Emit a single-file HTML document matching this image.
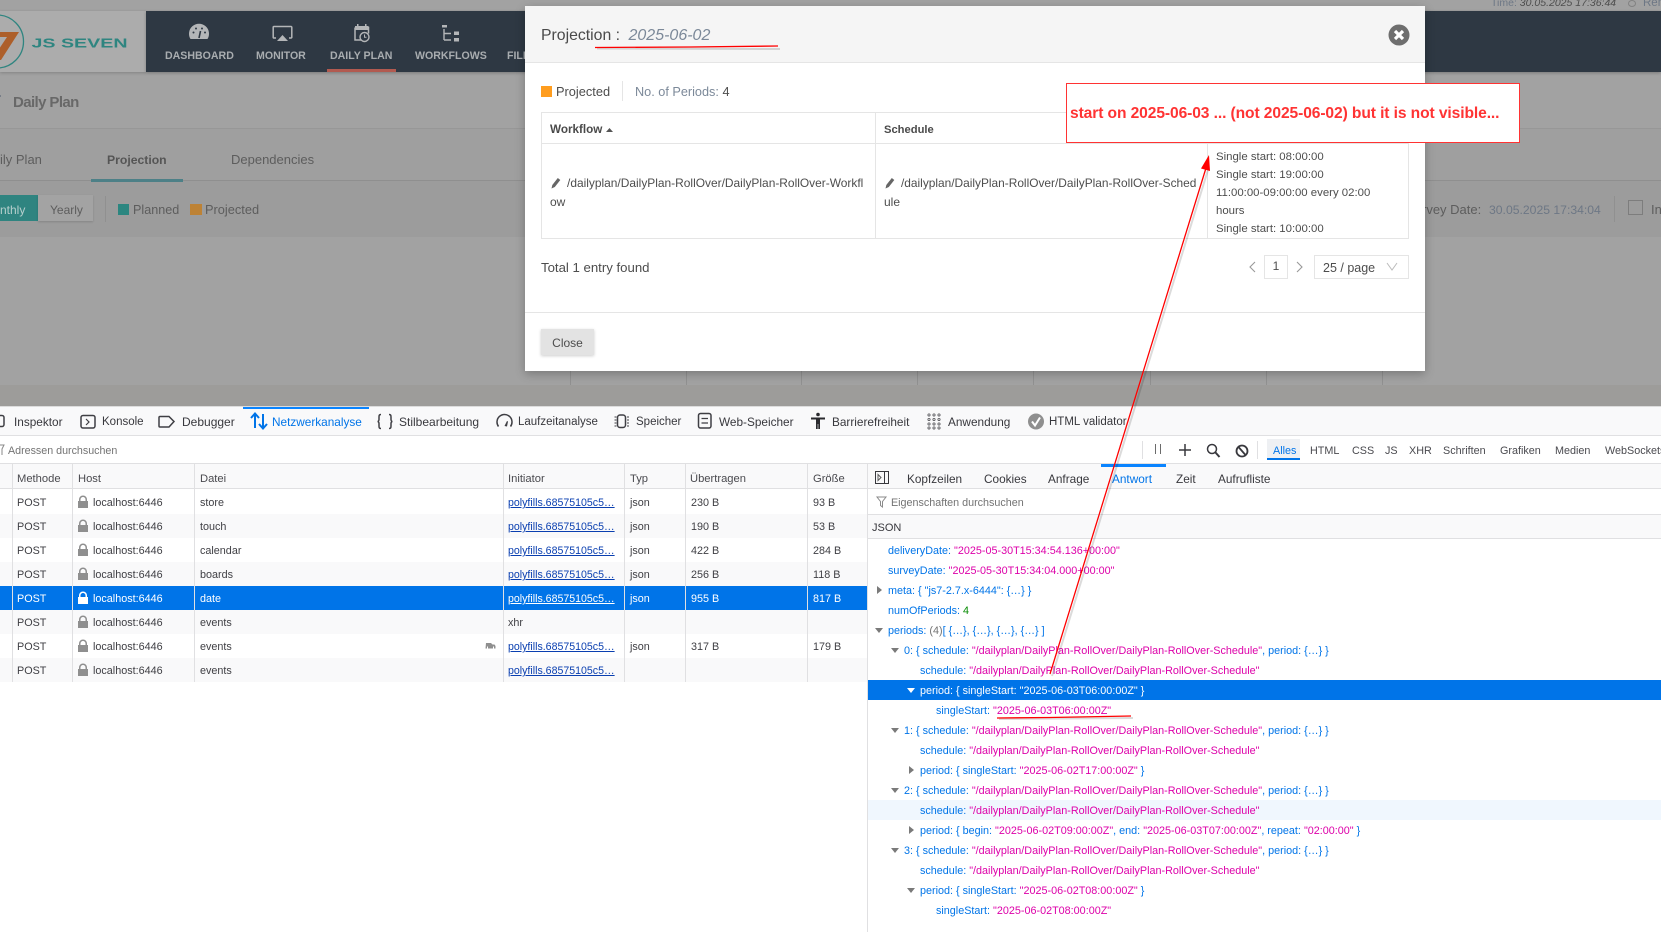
<!DOCTYPE html>
<html lang="de"><head><meta charset="utf-8"><title>Projection</title>
<style>
html,body{margin:0;padding:0;width:1661px;height:932px;overflow:hidden;background:#fff}
body{position:relative;font-family:"Liberation Sans",Arial,sans-serif;font-size:11px;color:#38383d}
div,span{box-sizing:border-box}
.a{position:absolute}
.t{position:absolute;white-space:nowrap;line-height:20px;height:20px}
svg{position:absolute;left:0;top:0;overflow:visible}
.nav{color:#a9adb0;font-weight:bold;font-size:10.6px;top:46px}
.dt{font-size:11.5px;color:#38383d;top:412px}
.ft{font-size:10.8px;color:#4a4a4f;top:441px}
.th{font-size:11.2px;color:#4a4a4f;top:469px}
.pt{font-size:11.8px;color:#38383d;top:468.500px}
.r{position:absolute;left:0;width:867px;height:24px;line-height:24px;font-size:10.8px;color:#3f3f44;background:#fff}
.r.o{background:#f9f9fa}
.r span{position:absolute;white-space:nowrap;top:1px}
.r .i{color:#0a3fb0;text-decoration:underline;font-size:10.6px}
.r.s{background:#0074e8;color:#fff}
.r.s .i{color:#fff}
.j{position:absolute;height:20px;line-height:20px;white-space:nowrap;font-size:10.8px;color:#0074e8;margin-top:1px}
.j b{font-weight:normal;color:#dd00a9}
.j.s,.j.s b{color:#fff}
.m{font-size:12px;color:#4d4d4d}
.v{position:absolute;width:1px;background:#e0e0e2}
</style></head><body>

<!-- dimmed application behind modal -->
<div class="a" style="left:0;top:0;width:1661px;height:406px;background:#a2a2a2"></div>
<div class="a" style="left:0;top:11px;width:146px;height:61px;background:#acacac;box-shadow:0 1px 3px rgba(0,0,0,.2)"></div>
<div class="a" style="left:146px;top:11px;width:1515px;height:61px;background:#2e3843;box-shadow:0 1px 3px rgba(0,0,0,.25)"></div>
<div class="a" style="left:327px;top:69px;width:69px;height:3px;background:#b25a50"></div>
<div class="a" style="left:0;top:128px;width:1661px;height:1px;background:#979797"></div>
<div class="a" style="left:0;top:129px;width:1661px;height:51px;background:#9f9f9f"></div>
<div class="a" style="left:0;top:180px;width:1661px;height:1px;background:#8f8f8f"></div>
<div class="a" style="left:0;top:181px;width:1661px;height:56px;background:#9c9c9c"></div>
<div class="a" style="left:91px;top:179px;width:92px;height:3px;background:#4d8087"></div>
<div class="a" style="left:0;top:385px;width:1661px;height:21px;background:#9d9c9a"></div>
<div class="a" style="left:0;top:195px;width:38px;height:26px;background:#2f8480"></div>
<div class="a" style="left:38px;top:195px;width:55px;height:26px;background:#a3a3a3;box-shadow:0 1px 2px rgba(0,0,0,.15)"></div>
<div class="a" style="left:105px;top:196px;width:1px;height:26px;background:#909090"></div>
<div class="a" style="left:118px;top:204px;width:11px;height:11px;background:#2c8680"></div>
<div class="a" style="left:190px;top:204px;width:12px;height:11px;background:#bd8235"></div>
<div class="a" style="left:1614px;top:196px;width:1px;height:26px;background:#909090"></div>
<div class="a" style="left:1628px;top:200px;width:15px;height:15px;border:1px solid #7d7d7d"></div>
<div class="a" style="left:570px;top:371px;width:1px;height:14px;background:#919191"></div>
<div class="a" style="left:686px;top:371px;width:1px;height:14px;background:#919191"></div>
<div class="a" style="left:801px;top:371px;width:1px;height:14px;background:#919191"></div>
<div class="a" style="left:917px;top:371px;width:1px;height:14px;background:#919191"></div>
<div class="a" style="left:1033px;top:371px;width:1px;height:14px;background:#919191"></div>
<div class="a" style="left:1150px;top:371px;width:1px;height:14px;background:#919191"></div>
<div class="a" style="left:1266px;top:371px;width:1px;height:14px;background:#919191"></div>
<div class="a" style="left:1382px;top:371px;width:1px;height:14px;background:#919191"></div>

<svg width="1661" height="406" viewBox="0 0 1661 406">
  <circle cx="-3" cy="41.500" r="26.500" fill="none" stroke="#2f8580" stroke-width="1.300"/>
  <path d="M-3 32H19L1 60H-3V52L7 37H-3Z" fill="#ad5f2a"/>
  <text x="31.500" y="47.500" textLength="96" lengthAdjust="spacingAndGlyphs" font-family="Liberation Sans" font-weight="bold" font-size="12.500" fill="#2f8580">JS SEVEN</text>
  <!-- dashboard -->
  <path d="M190.500 39a10 10 0 1 1 17 0Z" fill="#b4b6b8"/>
  <path d="M199 38l1.500-7" stroke="#2e3843" stroke-width="1.600"/>
  <circle cx="193.500" cy="32.500" r="1" fill="#2e3843"/><circle cx="196" cy="28.500" r="1" fill="#2e3843"/><circle cx="202" cy="28.500" r="1" fill="#2e3843"/><circle cx="205" cy="32.500" r="1" fill="#2e3843"/>
  <!-- monitor -->
  <path d="M276 38h-2a.8.8 0 0 1-.8-.8V27.300a.8.8 0 0 1 .8-.8h17a.8.8 0 0 1 .8.8v9.900a.8.8 0 0 1-.8.8h-2" fill="none" stroke="#b4b6b8" stroke-width="1.500"/>
  <path d="M277 41l5.500-6 5.500 6Z" fill="#b4b6b8"/>
  <!-- calendar -->
  <path d="M355 27.500h13.500v6M355 27.500v12.500h6" fill="none" stroke="#b4b6b8" stroke-width="1.500"/>
  <rect x="355" y="26" width="13.500" height="4" fill="#b4b6b8"/>
  <rect x="357" y="24" width="1.500" height="3" fill="#b4b6b8"/><rect x="365" y="24" width="1.500" height="3" fill="#b4b6b8"/>
  <circle cx="364.500" cy="37" r="4.500" fill="#2e3843" stroke="#b4b6b8" stroke-width="1.400"/>
  <path d="M364.500 34.500v2.700h2" fill="none" stroke="#b4b6b8" stroke-width="1"/>
  <!-- workflows -->
  <rect x="442" y="25" width="5" height="2.500" fill="#b4b6b8"/>
  <path d="M444 29v11M444 33.500h7M444 40h7" stroke="#b4b6b8" stroke-width="1.400" fill="none"/>
  <rect x="454" y="31.500" width="5" height="3.500" fill="#b4b6b8"/><rect x="454" y="38" width="5" height="3.500" fill="#b4b6b8"/>
  <path d="M0 96h1" stroke="#6b7280" stroke-width="1.500"/>
</svg>

<span class="t nav" style="left:165px">DASHBOARD</span>
<span class="t nav" style="left:256px">MONITOR</span>
<span class="t nav" style="left:330px">DAILY PLAN</span>
<span class="t nav" style="left:415px">WORKFLOWS</span>
<span class="t nav" style="left:507px">FILES</span>
<span class="t" style="left:13px;top:93px;font-size:15px;color:#686868;font-weight:bold;letter-spacing:-.6px">Daily Plan</span>
<span class="t" style="left:0;top:150px;font-size:13px;color:#5d5d5d">ily Plan</span>
<span class="t" style="left:107px;top:150px;font-size:12.200px;font-weight:bold;color:#555">Projection</span>
<span class="t" style="left:231px;top:150px;font-size:13px;color:#5d5d5d">Dependencies</span>
<span class="t" style="left:0;top:200px;font-size:12px;color:#b6cfcd">nthly</span>
<span class="t" style="left:50px;top:200px;font-size:12px;color:#5d5d5d">Yearly</span>
<span class="t" style="left:133px;top:199.500px;font-size:12.600px;color:#5d5d5d">Planned</span>
<span class="t" style="left:205px;top:199.500px;font-size:12.800px;color:#5d5d5d">Projected</span>
<span class="t" style="left:1422px;top:199.500px;font-size:13px;color:#5d5d5d">rvey Date:</span>
<span class="t" style="left:1489px;top:199.500px;font-size:12.200px;color:#6d7785">30.05.2025 17:34:04</span>
<span class="t" style="left:1651px;top:199.500px;font-size:13px;color:#5d5d5d">In</span>
<span class="t" style="left:1491px;top:-7px;font-size:10.500px;color:#666"><span style="color:#6d7785">Time:</span> <i style="color:#4d4d4d">30.05.2025 17:36:44</i></span>
<div class="a" style="left:1628px;top:0;width:8px;height:7px;border:1px solid #828282;border-radius:50%"></div>
<span class="t" style="left:1643px;top:-7px;font-size:11.500px;color:#6d7785">Ren</span>

<!-- modal -->
<div class="a" style="left:525px;top:6px;width:900px;height:365px;background:#fff;box-shadow:0 3px 9px rgba(0,0,0,.25)">
  <div class="a" style="left:0;top:0;width:900px;height:57px;background:#f5f5f5;border-bottom:1px solid #e5e5e5"></div>
  <div class="a" style="left:0;top:306px;width:900px;height:1px;background:#e5e5e5"></div>
</div>
<span class="t" style="left:541px;top:26px;font-size:15.800px;color:#4a4a4a">Projection :</span>
<i class="t" style="left:628.500px;top:26px;font-size:16px;color:#7c8999">2025-06-02</i>
<svg width="24" height="24" style="left:1387px;top:23px" viewBox="0 0 24 24">
  <circle cx="12" cy="12" r="10.500" fill="#6e6e6e"/>
  <path d="M8 8l8 8M16 8l-8 8" stroke="#fff" stroke-width="3.200"/>
</svg>
<div class="a" style="left:541px;top:86px;width:11px;height:11px;background:#ff9d1f"></div>
<span class="t m" style="left:556px;top:82px;font-size:12.800px">Projected</span>
<div class="v" style="left:622px;top:81px;height:20px;background:#e5e5e5"></div>
<span class="t" style="left:635px;top:82px;font-size:12.700px;color:#7c8999">No. of Periods: <span style="color:#4d4d4d">4</span></span>

<!-- modal table -->
<div class="a" style="left:541px;top:112px;width:868px;height:127px;border:1px solid #e5e5e5"></div>
<div class="a" style="left:541px;top:143px;width:868px;height:1px;background:#e5e5e5"></div>
<div class="v" style="left:875px;top:112px;height:127px;background:#e5e5e5"></div>
<div class="v" style="left:1207px;top:143px;height:96px;background:#e5e5e5"></div>
<span class="t" style="left:550px;top:119.500px;font-size:11.700px;font-weight:bold;color:#4a4a4a">Workflow</span>
<svg width="10" height="10" style="left:606px;top:125px"><path d="M0 7l3.500-4 3.500 4Z" fill="#555"/></svg>
<span class="t" style="left:884px;top:119.500px;font-size:11.200px;font-weight:bold;color:#4a4a4a">Schedule</span>
<svg width="12" height="14" style="left:550px;top:176px" viewBox="0 0 12 14"><path d="M1.500 12.500l.8-3.500 5.500-7 2.500 2-5.500 7Z" fill="#666"/></svg>
<span class="t m" style="left:567px;top:173px;font-size:11.950px">/dailyplan/DailyPlan-RollOver/DailyPlan-RollOver-Workfl</span>
<span class="t m" style="left:550px;top:191.500px">ow</span>
<svg width="12" height="14" style="left:884px;top:176px" viewBox="0 0 12 14"><path d="M1.500 12.500l.8-3.500 5.500-7 2.500 2-5.500 7Z" fill="#666"/></svg>
<span class="t m" style="left:901px;top:173px;font-size:11.900px">/dailyplan/DailyPlan-RollOver/DailyPlan-RollOver-Sched</span>
<span class="t m" style="left:884px;top:191.500px">ule</span>
<span class="t m" style="left:1216px;top:146.500px;font-size:11.400px">Single start: 08:00:00</span>
<span class="t m" style="left:1216px;top:164.500px;font-size:11.400px">Single start: 19:00:00</span>
<span class="t m" style="left:1216px;top:182.500px;font-size:11.400px">11:00:00-09:00:00 every 02:00</span>
<span class="t m" style="left:1216px;top:200.500px;font-size:11.400px">hours</span>
<span class="t m" style="left:1216px;top:218.500px;font-size:11.400px">Single start: 10:00:00</span>
<span class="t m" style="left:541px;top:258px;font-size:13.200px">Total 1 entry found</span>
<svg width="10" height="12" style="left:1248px;top:261px"><path d="M7 1L2 6l5 5" fill="none" stroke="#999" stroke-width="1.100"/></svg>
<div class="a" style="left:1264px;top:255px;width:24px;height:24px;border:1px solid #e5e5e5;text-align:center;line-height:21px;font-size:12px;color:#4d4d4d">1</div>
<svg width="10" height="12" style="left:1295px;top:261px"><path d="M2 1l5 5-5 5" fill="none" stroke="#999" stroke-width="1.100"/></svg>
<div class="a" style="left:1314px;top:255px;width:95px;height:24px;border:1px solid #e5e5e5"></div>
<span class="t m" style="left:1323px;top:258px;font-size:12.500px">25 / page</span>
<svg width="12" height="10" style="left:1386px;top:262px"><path d="M1 1l5 7 5-7" fill="none" stroke="#bbb" stroke-width="1"/></svg>
<div class="a" style="left:541px;top:329px;width:53px;height:26px;background:#e3e3e3;box-shadow:0 1px 3px rgba(0,0,0,.2);text-align:center;line-height:28px;font-size:12px;color:#4d4d4d">Close</div>

<!-- devtools -->
<div class="a" style="left:0;top:406px;width:1661px;height:526px;background:#fff"></div>
<div class="a" style="left:0;top:406px;width:1661px;height:30px;background:#f9f9fa;border-bottom:1px solid #e0e0e2;border-top:1px solid #dcdcdc"></div>
<div class="a" style="left:243px;top:407px;width:126px;height:2px;background:#0a84ff"></div>
<div class="a" style="left:0;top:463px;width:1661px;height:1px;background:#e0e0e2"></div>
<div class="a" style="left:0;top:464px;width:867px;height:25px;background:#f9f9fa;border-bottom:1px solid #e0e0e2"></div>
<div class="a" style="left:868px;top:464px;width:793px;height:25px;background:#f9f9fa;border-bottom:1px solid #e0e0e2"></div>
<div class="a" style="left:868px;top:514px;width:793px;height:25px;background:#f9f9fa;border-top:1px solid #e0e0e2;border-bottom:1px solid #e0e0e2"></div>
<div class="a" style="left:1101px;top:464px;width:65px;height:3px;background:#0a84ff"></div>

<span class="t dt" style="left:14px;font-size:11.800px">Inspektor</span>
<span class="t dt" style="left:102px">Konsole</span>
<span class="t dt" style="left:182px;font-size:12px">Debugger</span>
<span class="t dt" style="left:272px;color:#0074e8;font-size:11.800px">Netzwerkanalyse</span>
<span class="t dt" style="left:399px;font-size:12px">Stilbearbeitung</span>
<span class="t dt" style="left:518px">Laufzeitanalyse</span>
<span class="t dt" style="left:636px">Speicher</span>
<span class="t dt" style="left:719px;font-size:11.800px">Web-Speicher</span>
<span class="t dt" style="left:832px;font-size:11.800px">Barrierefreiheit</span>
<span class="t dt" style="left:948px;font-size:11.800px">Anwendung</span>
<span class="t dt" style="left:1049px">HTML validator</span>

<svg width="1661" height="932" viewBox="0 0 1661 932">
  <g fill="none" stroke="#3f3f44" stroke-width="1.500">
    <path d="M-1 415.500h3a2 2 0 0 1 2 2v7a2 2 0 0 1-2 2h-3"/>
    <rect x="81" y="415.500" width="14" height="12.500" rx="2"/>
    <path d="M86 419l3 3-3 3" stroke-width="1.200"/>
    <path d="M160 416.500h9l5 5-5 5.500h-9a1 1 0 0 1-1-1v-8.500a1 1 0 0 1 1-1Z"/>
    <path d="M381 414.500c-2 0-2 1-2 3v2c0 1.500-1 2-1.500 2 .5 0 1.500.5 1.500 2v2c0 2 0 3 2 3M389 414.500c2 0 2 1 2 3v2c0 1.500 1 2 1.500 2-.5 0-1.500.5-1.500 2v2c0 2 0 3-2 3"/>
    <path d="M498.500 426.500a7.500 7.500 0 1 1 12 0"/>
    <rect x="617.500" y="415" width="8" height="12.500" rx="2.500"/>
    <path d="M614.500 417h2M614.500 420h2M614.500 423h2M614.500 426h2M627 417h2M627 420h2M627 423h2M627 426h2" stroke-width="1"/>
    <rect x="698.500" y="413.500" width="12.500" height="14.500" rx="2"/>
    <path d="M701.500 418.500h6.500M701.500 423h6.500" stroke-width="1.200"/>
  </g>
  <path d="M504.500 426l2.500-5 1 .5-1 5Z" fill="#3f3f44"/>
  <g fill="none" stroke="#0074e8" stroke-width="2"><path d="M255 428v-14M251 418l4-4.500 4 4.500M263 414v14M259 424l4 4.500 4-4.500"/></g>
  <g fill="#2a2a2e"><circle cx="818" cy="414.500" r="1.800"/><path d="M811 417.500h14v2h-5v9.500h-1.700v-5h-.6v5H816v-9.500h-5Z"/></g>
  <g fill="none" stroke="#4a4a4f" stroke-width=".8">
    <circle cx="929" cy="415" r="1.100"/><circle cx="934" cy="415" r="1.100"/><circle cx="939" cy="415" r="1.100"/>
    <circle cx="929" cy="419.500" r="1.100"/><circle cx="934" cy="419.500" r="1.100"/><circle cx="939" cy="419.500" r="1.100"/>
    <circle cx="929" cy="424" r="1.100"/><circle cx="934" cy="424" r="1.100"/><circle cx="939" cy="424" r="1.100"/>
    <circle cx="929" cy="428" r="1.100"/><circle cx="934" cy="428" r="1.100"/><circle cx="939" cy="428" r="1.100"/>
  </g>
  <circle cx="1036" cy="421.500" r="8" fill="#8f8f8f"/><path d="M1032 421.500l3 4 5-8" fill="none" stroke="#fff" stroke-width="2"/>
  <path d="M0 445h4l-2 4v6" fill="none" stroke="#8a8a8a" stroke-width="1"/>
  <path d="M877 497h9l-3.500 4.500v5.500l-2-1.500v-4Z" fill="none" stroke="#8a8a8a" stroke-width="1"/>
  <path d="M1155.500 444v10M1160.500 444v10" stroke="#6b6b6b" stroke-width="1"/>
  <path d="M1185 444v12M1179 450h12" stroke="#38383d" stroke-width="1.500"/>
  <circle cx="1212" cy="449" r="4.500" fill="none" stroke="#38383d" stroke-width="1.500"/><path d="M1215.500 452.500l4 4.500" stroke="#38383d" stroke-width="2"/>
  <circle cx="1242" cy="451" r="5.500" fill="none" stroke="#38383d" stroke-width="1.800"/><path d="M1238.500 447l7 8" stroke="#38383d" stroke-width="1.800"/>
  <rect x="875.500" y="471.500" width="13" height="12" fill="none" stroke="#38383d" stroke-width="1"/><path d="M884.500 471.500v12" stroke="#38383d"/><path d="M878 474.500l3 3-3 3Z" fill="none" stroke="#5a5a5a"/>
</svg>

<div class="v" style="left:1142px;top:441px;height:18px"></div>
<div class="v" style="left:1257px;top:441px;height:18px"></div>
<div class="a" style="left:1267px;top:439px;width:33px;height:21px;background:#eef0f3;border-bottom:2px solid #0074e8"></div>
<span class="t" style="left:8px;top:441px;font-size:10.700px;color:#737373">Adressen durchsuchen</span>
<span class="t ft" style="left:1273px;color:#0074e8">Alles</span>
<span class="t ft" style="left:1310px">HTML</span>
<span class="t ft" style="left:1352px">CSS</span>
<span class="t ft" style="left:1385px">JS</span>
<span class="t ft" style="left:1409px">XHR</span>
<span class="t ft" style="left:1443px">Schriften</span>
<span class="t ft" style="left:1500px">Grafiken</span>
<span class="t ft" style="left:1555px">Medien</span>
<span class="t ft" style="left:1605px">WebSockets</span>

<span class="t th" style="left:17px">Methode</span>
<span class="t th" style="left:78px">Host</span>
<span class="t th" style="left:200px">Datei</span>
<span class="t th" style="left:508px">Initiator</span>
<span class="t th" style="left:630px">Typ</span>
<span class="t th" style="left:690px">Übertragen</span>
<span class="t th" style="left:813px">Größe</span>

<span class="t pt" style="left:907px">Kopfzeilen</span>
<span class="t pt" style="left:984px">Cookies</span>
<span class="t pt" style="left:1048px">Anfrage</span>
<span class="t pt" style="left:1112px;color:#0074e8">Antwort</span>
<span class="t pt" style="left:1176px">Zeit</span>
<span class="t pt" style="left:1218px">Aufrufliste</span>

<!-- request rows -->
<div class="r" style="top:490px"><span style="left:17px">POST</span><span style="left:93px">localhost:6446</span><span style="left:200px">store</span><span class="i" style="left:508px">polyfills.68575105c5…</span><span style="left:630px">json</span><span style="left:691px">230 B</span><span style="left:813px">93 B</span></div>
<div class="r o" style="top:514px"><span style="left:17px">POST</span><span style="left:93px">localhost:6446</span><span style="left:200px">touch</span><span class="i" style="left:508px">polyfills.68575105c5…</span><span style="left:630px">json</span><span style="left:691px">190 B</span><span style="left:813px">53 B</span></div>
<div class="r" style="top:538px"><span style="left:17px">POST</span><span style="left:93px">localhost:6446</span><span style="left:200px">calendar</span><span class="i" style="left:508px">polyfills.68575105c5…</span><span style="left:630px">json</span><span style="left:691px">422 B</span><span style="left:813px">284 B</span></div>
<div class="r o" style="top:562px"><span style="left:17px">POST</span><span style="left:93px">localhost:6446</span><span style="left:200px">boards</span><span class="i" style="left:508px">polyfills.68575105c5…</span><span style="left:630px">json</span><span style="left:691px">256 B</span><span style="left:813px">118 B</span></div>
<div class="r s" style="top:586px"><span style="left:17px">POST</span><span style="left:93px">localhost:6446</span><span style="left:200px">date</span><span class="i" style="left:508px">polyfills.68575105c5…</span><span style="left:630px">json</span><span style="left:691px">955 B</span><span style="left:813px">817 B</span></div>
<div class="r o" style="top:610px"><span style="left:17px">POST</span><span style="left:93px">localhost:6446</span><span style="left:200px">events</span><span style="left:508px">xhr</span></div>
<div class="r" style="top:634px"><span style="left:17px">POST</span><span style="left:93px">localhost:6446</span><span style="left:200px">events</span><span class="i" style="left:508px">polyfills.68575105c5…</span><span style="left:630px">json</span><span style="left:691px">317 B</span><span style="left:813px">179 B</span></div>
<div class="r o" style="top:658px"><span style="left:17px">POST</span><span style="left:93px">localhost:6446</span><span style="left:200px">events</span><span class="i" style="left:508px">polyfills.68575105c5…</span></div>

<div class="v" style="left:12px;top:464px;height:218px"></div>
<div class="v" style="left:72px;top:464px;height:218px"></div>
<div class="v" style="left:194px;top:464px;height:218px"></div>
<div class="v" style="left:503px;top:464px;height:218px"></div>
<div class="v" style="left:624px;top:464px;height:218px"></div>
<div class="v" style="left:685px;top:464px;height:218px"></div>
<div class="v" style="left:807px;top:464px;height:218px"></div>
<div class="v" style="left:867px;top:464px;height:468px"></div>

<svg width="1661" height="932" viewBox="0 0 1661 932">
  <g fill="#8f8f8f">
    <path d="M78 501h1v-1.500a4 4 0 0 1 8 0v1.500h1v7H78Zm2.500 0h5v-1.500a2.500 2.500 0 0 0-5 0Z" fill-rule="evenodd"/>
    <path d="M78 525h1v-1.500a4 4 0 0 1 8 0v1.500h1v7H78Zm2.500 0h5v-1.500a2.500 2.500 0 0 0-5 0Z" fill-rule="evenodd"/>
    <path d="M78 549h1v-1.500a4 4 0 0 1 8 0v1.500h1v7H78Zm2.500 0h5v-1.500a2.500 2.500 0 0 0-5 0Z" fill-rule="evenodd"/>
    <path d="M78 573h1v-1.500a4 4 0 0 1 8 0v1.500h1v7H78Zm2.500 0h5v-1.500a2.500 2.500 0 0 0-5 0Z" fill-rule="evenodd"/>
    <path d="M78 621h1v-1.500a4 4 0 0 1 8 0v1.500h1v7H78Zm2.500 0h5v-1.500a2.500 2.500 0 0 0-5 0Z" fill-rule="evenodd"/>
    <path d="M78 645h1v-1.500a4 4 0 0 1 8 0v1.500h1v7H78Zm2.500 0h5v-1.500a2.500 2.500 0 0 0-5 0Z" fill-rule="evenodd"/>
    <path d="M78 669h1v-1.500a4 4 0 0 1 8 0v1.500h1v7H78Zm2.500 0h5v-1.500a2.500 2.500 0 0 0-5 0Z" fill-rule="evenodd"/>
    <path d="M486 643h5l1.500 1.500h2l1 1.500v2.500h-1.500v-2h-1v2H488v-2h-1v2h-1.500Z"/>
  </g>
  <path d="M78 597h1v-1.500a4 4 0 0 1 8 0v1.500h1v7H78Zm2.500 0h5v-1.500a2.500 2.500 0 0 0-5 0Z" fill="#fff" fill-rule="evenodd"/>
</svg>

<!-- JSON tree -->
<div class="a" style="left:868px;top:680px;width:793px;height:20px;background:#0074e8"></div>
<div class="a" style="left:868px;top:800px;width:793px;height:20px;background:#f0f7fe"></div>
<span class="t" style="left:872px;top:518px;font-size:11px;color:#38383d">JSON</span>
<span class="t" style="left:891px;top:493px;font-size:10.750px;color:#737373">Eigenschaften durchsuchen</span>

<svg width="1661" height="932" viewBox="0 0 1661 932">
  <g fill="#7a7a7a">
    <path d="M877 586l5 4-5 4Z"/>
    <path d="M875 628h8l-4 5Z"/>
    <path d="M891 648h8l-4 5Z"/>
    <path d="M891 728h8l-4 5Z"/>
    <path d="M909 766l5 4-5 4Z"/>
    <path d="M891 788h8l-4 5Z"/>
    <path d="M909 826l5 4-5 4Z"/>
    <path d="M891 848h8l-4 5Z"/>
    <path d="M907 888h8l-4 5Z"/>
  </g>
  <path d="M907 688h8l-4 5Z" fill="#fff"/>
</svg>

<div class="j" style="left:888px;top:540px">deliveryDate: <b>"2025-05-30T15:34:54.136+00:00"</b></div>
<div class="j" style="left:888px;top:560px">surveyDate: <b>"2025-05-30T15:34:04.000+00:00"</b></div>
<div class="j" style="left:888px;top:580px">meta: { "js7-2.7.x-6444": {…} }</div>
<div class="j" style="left:888px;top:600px">numOfPeriods: <span style="color:#058b00">4</span></div>
<div class="j" style="left:888px;top:620px">periods: <span style="color:#737373">(4)</span>[ {…}, {…}, {…}, {…} ]</div>
<div class="j" style="left:904px;top:640px">0: { schedule: <b>"/dailyplan/DailyPlan-RollOver/DailyPlan-RollOver-Schedule"</b>, period: {…} }</div>
<div class="j" style="left:920px;top:660px">schedule: <b>"/dailyplan/DailyPlan-RollOver/DailyPlan-RollOver-Schedule"</b></div>
<div class="j s" style="left:920px;top:680px">period: { singleStart: <b>"2025-06-03T06:00:00Z"</b> }</div>
<div class="j" style="left:936px;top:700px">singleStart: <b>"2025-06-03T06:00:00Z"</b></div>
<div class="j" style="left:904px;top:720px">1: { schedule: <b>"/dailyplan/DailyPlan-RollOver/DailyPlan-RollOver-Schedule"</b>, period: {…} }</div>
<div class="j" style="left:920px;top:740px">schedule: <b>"/dailyplan/DailyPlan-RollOver/DailyPlan-RollOver-Schedule"</b></div>
<div class="j" style="left:920px;top:760px">period: { singleStart: <b>"2025-06-02T17:00:00Z"</b> }</div>
<div class="j" style="left:904px;top:780px">2: { schedule: <b>"/dailyplan/DailyPlan-RollOver/DailyPlan-RollOver-Schedule"</b>, period: {…} }</div>
<div class="j" style="left:920px;top:800px">schedule: <b>"/dailyplan/DailyPlan-RollOver/DailyPlan-RollOver-Schedule"</b></div>
<div class="j" style="left:920px;top:820px">period: { begin: <b>"2025-06-02T09:00:00Z"</b>, end: <b>"2025-06-03T07:00:00Z"</b>, repeat: <b>"02:00:00"</b> }</div>
<div class="j" style="left:904px;top:840px">3: { schedule: <b>"/dailyplan/DailyPlan-RollOver/DailyPlan-RollOver-Schedule"</b>, period: {…} }</div>
<div class="j" style="left:920px;top:860px">schedule: <b>"/dailyplan/DailyPlan-RollOver/DailyPlan-RollOver-Schedule"</b></div>
<div class="j" style="left:920px;top:880px">period: { singleStart: <b>"2025-06-02T08:00:00Z"</b> }</div>
<div class="j" style="left:936px;top:900px">singleStart: <b>"2025-06-02T08:00:00Z"</b></div>

<!-- annotations -->
<div class="a" style="left:1066px;top:83px;width:454px;height:60px;background:#fff;border:1px solid #ff3333"></div>
<span class="t" style="left:1070px;top:103.500px;font-size:15.600px;font-weight:bold;color:#ff3333;letter-spacing:-.1px">start on 2025-06-03 ... (not 2025-06-02) but it is not visible...</span>
<svg width="1661" height="932" viewBox="0 0 1661 932">
  <g fill="none" stroke="#000" stroke-opacity=".14" stroke-width="2">
    <path d="M1052 676L1208 170"/><path d="M597 48.500L780 49"/><path d="M999 719L1133 718"/>
  </g>
  <path d="M1050 674L1206 168" fill="none" stroke="#f00" stroke-width="1.300"/>
  <path d="M1209 155L1201 168.500L1210 171Z" fill="#f00"/>
  <path d="M595 47.500L690 47L778 46" fill="none" stroke="#f00" stroke-width="1.300"/>
  <path d="M997 718L1050 717.500L1131 716" fill="none" stroke="#f00" stroke-width="1.300"/>
</svg>
</body></html>
